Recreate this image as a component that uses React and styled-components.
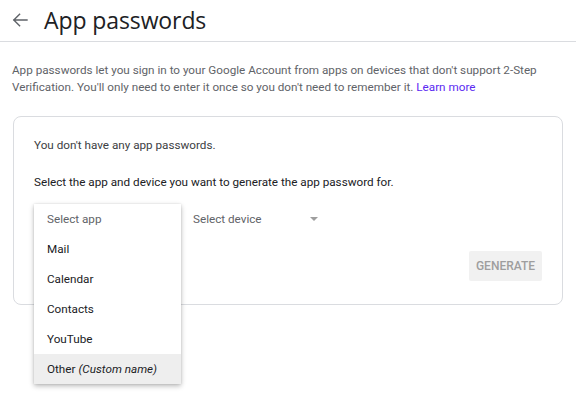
import React from "react";
import styled, { createGlobalStyle } from "styled-components";

const Global = createGlobalStyle`
  html, body { margin: 0; padding: 0; background: #fff; }
  body { font-family: Roboto, "Liberation Sans", Arial, sans-serif; -webkit-font-smoothing: antialiased; }
`;

const Page = styled.div`
  width: 576px;
  height: 397px;
  overflow: hidden;
  background: #fff;
`;

const Header = styled.header`
  height: 42px;
  box-sizing: border-box;
  border-bottom: 1px solid #dadce0;
  display: flex;
  align-items: center;
  padding-left: 12px;
`;

const BackButton = styled.button`
  width: 16px;
  height: 16px;
  padding: 0;
  margin: 0 16px 2px 0;
  border: 0;
  background: none;
  display: flex;
  align-items: center;
  justify-content: center;
  cursor: pointer;
`;

const Title = styled.h1`
  margin: 0 0 2px 0;
  font-family: "Open Sans", "Noto Sans", sans-serif;
  font-weight: 400;
  font-size: 23px;
  letter-spacing: -0.1px;
  color: #202124;
  line-height: 30px;
`;

const Intro = styled.p`
  margin: 20px 0 0 0;
  padding: 0 12px;
  font-size: 11.7px;
  line-height: 17px;
  color: #5f6368;
  height: 54px;
`;

const Link = styled.a`
  color: #5b2af2;
  text-decoration: none;
`;

const Card = styled.section`
  margin: 0 13px;
  border: 1px solid #dadce0;
  border-radius: 8px;
  padding: 18px 20px 23px 20px;
  display: flex;
  flex-direction: column;
  height: 189px;
  box-sizing: border-box;
`;

const CardText = styled.div`
  font-size: 11.7px;
  line-height: 20px;
  color: ${(p) => (p.$strong ? "#202124" : "#3c4043")};
  margin-top: ${(p) => p.$gap || 0}px;
`;

const Controls = styled.div`
  margin-top: 12px;
  display: flex;
  align-items: center;
  gap: 12px;
  height: 30px;
`;

const SelectWrap = styled.div`
  position: relative;
  width: 147px;
  height: 30px;
`;

const SelectField = styled.div`
  width: ${(p) => p.$w}px;
  height: 30px;
  display: flex;
  align-items: center;
  justify-content: space-between;
  font-size: 11.7px;
  color: #5f6368;
  box-sizing: border-box;
  padding-right: 12px;
`;

const Caret = styled.span`
  width: 0;
  height: 0;
  border-left: 4px solid transparent;
  border-right: 4px solid transparent;
  border-top: 4px solid #9e9e9e;
`;

const Menu = styled.ul`
  position: absolute;
  left: 0;
  top: 0;
  width: 147px;
  margin: 0;
  padding: 0;
  list-style: none;
  background: #fff;
  box-shadow: 0 2px 5px rgba(0, 0, 0, 0.28), 0 0 2px rgba(0, 0, 0, 0.1);
  z-index: 2;
`;

const MenuItem = styled.li`
  height: 30px;
  display: flex;
  align-items: center;
  padding-left: 13px;
  font-size: 11.7px;
  color: ${(p) => (p.$placeholder ? "#5f6368" : "#202124")};
  background: ${(p) => (p.$active ? "#eeeeee" : "#fff")};
  white-space: nowrap;
`;

const Hint = styled.em`
  font-style: italic;
  margin-left: 3px;
`;

const ButtonRow = styled.div`
  margin-top: 17px;
  display: flex;
  justify-content: flex-end;
`;

const GenerateButton = styled.button`
  width: 73px;
  height: 30px;
  border: 0;
  border-radius: 2px;
  background: #f1f1f1;
  color: #9e9e9e;
  font-family: Roboto, sans-serif;
  font-size: 12px;
  font-weight: 500;
  text-transform: uppercase;
  padding: 0;
`;

const apps = [
  { label: "Select app", placeholder: true },
  { label: "Mail" },
  { label: "Calendar" },
  { label: "Contacts" },
  { label: "YouTube" },
  { label: "Other", hint: "(Custom name)", active: true },
];

export default function App() {
  return (
    <Page>
      <Global />
      <Header>
        <BackButton aria-label="Back">
          <svg width="16" height="16" viewBox="0 0 16 16" fill="none">
            <path d="M15 8H1.8M7.6 2.2L1.8 8l5.8 5.8" stroke="#5f6368" strokeWidth="1.4" strokeLinecap="square" />
          </svg>
        </BackButton>
        <Title>App passwords</Title>
      </Header>
      <Intro>
        App passwords let you sign in to your Google Account from apps on devices that don't support 2-Step
        Verification. You'll only need to enter it once so you don't need to remember it.{" "}
        <Link href="#">Learn more</Link>
      </Intro>
      <Card>
        <CardText>You don't have any app passwords.</CardText>
        <CardText $strong $gap={17}>Select the app and device you want to generate the app password for.</CardText>
        <Controls>
          <SelectWrap>
            <SelectField $w={147} />
            <Menu>
              {apps.map((a) => (
                <MenuItem key={a.label} $placeholder={a.placeholder} $active={a.active}>
                  {a.label}
                  {a.hint && <Hint>{a.hint}</Hint>}
                </MenuItem>
              ))}
            </Menu>
          </SelectWrap>
          <SelectField $w={137}>
            Select device
            <Caret />
          </SelectField>
        </Controls>
        <ButtonRow>
          <GenerateButton disabled>Generate</GenerateButton>
        </ButtonRow>
      </Card>
    </Page>
  );
}
